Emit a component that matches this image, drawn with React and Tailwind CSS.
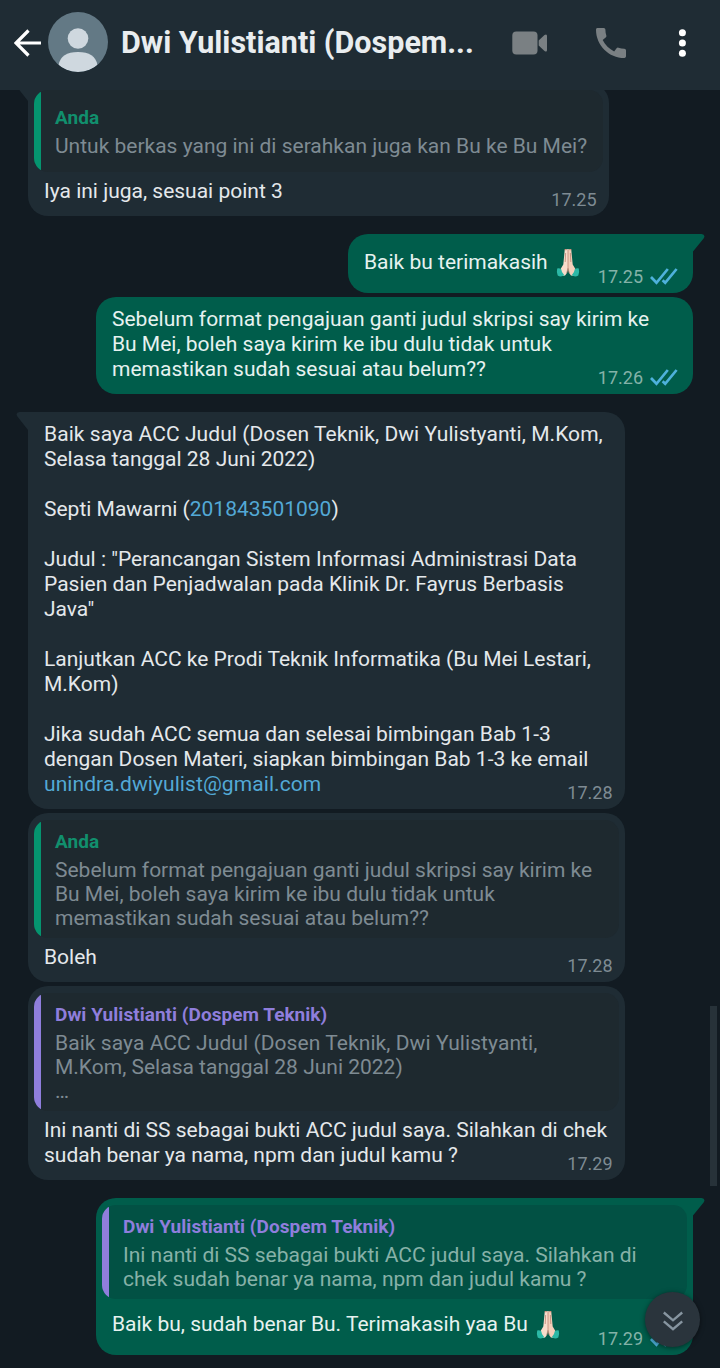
import React from "react";

function PrayIcon() {
  return (
    <svg viewBox="0 0 24 30" className="relative -left-px inline-block h-[30px] w-6 shrink-0">
      <path d="M8.700 2Q9.700.400 10.700 1.600Q11.600.300 12 1.800V20.500L10.600 25.500Q9.500 28 6.500 28Q3.500 24 4.600 21L7.300 16.500Z" fill="#f8dccb" />
      <path d="M15.300 2Q14.300.400 13.300 1.600Q12.400.300 12 1.800V20.500L13.400 25.500Q14.500 28 17.500 28Q20.500 24 19.400 21L16.700 16.500Z" fill="#f3cfba" />
      <path d="M12 2V20L10.800 25M12 20 13.200 25M9.600 5 9.200 14M14.400 5 14.800 14" fill="none" stroke="#bd8573" strokeWidth=".8" />
      <path d="M8.700 1.700H10.500M13.500 1.700H15.300" stroke="#d8907e" strokeWidth="1.200" />
      <path d="M1.200 20.500Q3.500 20 5.200 21.200Q5.500 24.500 8.300 27.300Q5 29.500 1.700 27.500Q.300 24 1.200 20.500Z" fill="#2cb8a6" />
      <path d="M22.800 20.500Q20.500 20 18.800 21.200Q18.500 24.500 15.700 27.300Q19 29.500 22.300 27.500Q23.700 24 22.800 20.500Z" fill="#2cb8a6" />
    </svg>
  );
}

function Ticks() {
  return (
    <svg viewBox="0 0 28 18" className="ml-[7px] h-[18px] w-7 shrink-0" fill="none" stroke="#4eb1dc" strokeWidth="2.700">
      <path d="M1 9 6.500 14.800 17.800 1" />
      <path d="M12.600 12.300 15.200 14.800 26.600 1" />
    </svg>
  );
}

function Quote({ name, lines, mine, own, className }) {
  return (
    <div
      className={`mx-[6px] flex overflow-hidden rounded-[14px] ${own ? "bg-[#025144]" : "bg-[#1e292f]"} ${className}`}
    >
      <div className={`w-[7px] shrink-0 ${mine ? "bg-[#05946f]" : "bg-[#8f7edc]"}`} />
      <div className="flex flex-col justify-center pt-[2px] pl-[14px]">
        <div className={`mb-[5px] whitespace-nowrap text-[19px] leading-[22px] font-bold tracking-[0.03px] ${mine ? "text-[#118f6d]" : "text-[#8f7edc]"}`}>
          {name}
        </div>
        {lines.map((line, i) => (
          <div key={i} className={`whitespace-nowrap text-[21px] leading-6 ${own ? "text-[#87b1a8]" : "text-[#7e8b93]"}`}>
            {line}
          </div>
        ))}
      </div>
    </div>
  );
}

function Bubble({ own, tail, time, quote, lines, className, bodyClass = "pb-3" }) {
  const corners = tail ? (own ? "rounded-b-[20px] rounded-tl-[20px]" : "rounded-b-[20px] rounded-tr-[20px]") : "rounded-[20px]";
  return (
    <div
      className={`relative flex shrink-0 flex-col ${corners} ${own ? "self-end bg-[#005d4b]" : "self-start bg-[#1f2c34]"} ${className}`}
    >
      {tail && own && (
        <svg viewBox="0 0 14 20" className="absolute top-0 -right-3 h-5 w-[14px]" fill="#005d4b">
          <path d="M0 0H10.500Q15 .800 12.600 4.500L2 17.500V20H0Z" />
        </svg>
      )}
      {tail && !own && (
        <svg viewBox="0 0 14 20" className="absolute top-0 -left-3 h-5 w-[14px]" fill="#1f2c34">
          <path d="M14 0H3.500Q-1 .800 1.400 4.500L12 18V20H14Z" />
        </svg>
      )}
      {quote}
      <div className="flex items-end">
        <div className={`w-0 flex-1 pl-4 text-[21px] leading-[25px] whitespace-nowrap ${own ? "text-[#e6f2f0]" : "text-[#e4e8eb]"} ${bodyClass}`}>
          {lines.map((line, i) => (
            <div key={i} className="flex h-[25px] items-center whitespace-pre">
              {line}
            </div>
          ))}
        </div>
        <div className={`flex items-center pb-[6px] text-[18px] leading-5 ${own ? "pr-[15px] text-[#84b2a8]" : "pr-[12.5px] text-[#7e8b93]"}`}>
          <span>{time}</span>
          {own && <Ticks />}
        </div>
      </div>
    </div>
  );
}

function Header() {
  return (
    <header className="flex h-[90px] shrink-0 items-center bg-[#1f2c34] pb-[5px]">
      <svg viewBox="0 0 28 28" className="ml-[14px] h-7 w-7 shrink-0" fill="none" stroke="#fff" strokeWidth="3.200">
        <path d="M27 14H2.500M14.500 1.500 2 14 14.500 26.500" />
      </svg>
      <svg viewBox="0 0 60 60" className="relative -top-px ml-[6px] h-[60px] w-[60px] shrink-0">
        <defs>
          <clipPath id="avatar">
            <circle cx="30" cy="30" r="30" />
          </clipPath>
        </defs>
        <g clipPath="url(#avatar)">
          <rect width="60" height="60" fill="#637985" />
          <circle cx="30" cy="26.500" r="10.300" fill="#cfd8df" />
          <path d="M10.500 53Q13 40 30 40T49.500 53Q41 60 30 60T10.500 53Z" fill="#cfd8df" />
        </g>
      </svg>
      <h1 className="ml-[13px] w-[391px] text-[30.5px] leading-9 font-bold whitespace-nowrap text-[#e9edef]">
        Dwi Yulistianti (Dospem...
      </h1>
      <svg viewBox="0 0 36 24" className="h-6 w-9 shrink-0" fill="#7a8083">
        <rect x="0.300" y="0.500" width="25.200" height="23" rx="4" />
        <path d="M26.700 9.500 32.500 4Q35 2.500 35 5V19Q35 21.500 32.500 20L26.700 14.500Z" />
      </svg>
      <svg viewBox="3 3 18 18" className="ml-12 h-[30px] w-[30px] shrink-0" fill="#7a8083">
        <path d="M20.010 15.380c-1.230 0-2.420-.200-3.530-.560a.977.977 0 0 0-1.010.240l-1.570 1.970c-2.830-1.350-5.480-3.900-6.890-6.830l1.950-1.660c.270-.280.350-.670.240-1.020-.370-1.110-.560-2.300-.560-3.530 0-.540-.450-.990-.990-.990H4.190C3.650 3 3 3.240 3 3.990 3 13.280 10.730 21 20.010 21c.710 0 .990-.630.990-1.180v-3.450c0-.540-.450-.990-.990-.990z" />
      </svg>
      <svg viewBox="0 0 8 28" className="ml-[52px] h-7 w-2 shrink-0" fill="#fff">
        <circle cx="4.400" cy="3.800" r="3.500" />
        <circle cx="4.400" cy="14" r="3.500" />
        <circle cx="4.400" cy="24.200" r="3.500" />
      </svg>
    </header>
  );
}

export default function App() {
  return (
    <div className="relative flex h-[1368px] w-[720px] flex-col overflow-hidden bg-[#121b22] font-[Roboto,sans-serif]">
      <Header />
      <main className="flex flex-1 flex-col overflow-hidden pr-[27px] pl-7">
        <Bubble
          tail
          time="17.25"
          className="-mt-[7px] w-[581px]"
          bodyClass="pt-[7px] pb-3"
          quote={<Quote mine name="Anda" className="mt-[7px] h-[82px]" lines={["Untuk berkas yang ini di serahkan juga kan Bu ke Bu Mei?"]} />}
          lines={["Iya ini juga, sesuai point 3"]}
        />
        <Bubble
          own
          tail
          time="17.25"
          className="mt-[18px] w-[345px]"
          bodyClass="pt-4 pb-[18px]"
          lines={[<React.Fragment key="t">Baik bu terimakasih <span className="ml-1 flex"><PrayIcon /></span></React.Fragment>]}
        />
        <Bubble
          own
          time="17.26"
          className="mt-1 w-[597px]"
          bodyClass="pt-[10px] pb-3"
          lines={[
            "Sebelum format pengajuan ganti judul skripsi say kirim ke",
            "Bu Mei, boleh saya kirim ke ibu dulu tidak untuk",
            "memastikan sudah sesuai atau belum??",
          ]}
        />
        <Bubble
          tail
          time="17.28"
          className="mt-[18px] w-[597px]"
          bodyClass="pt-[10px] pb-3"
          lines={[
            <span key="acc" className="tracking-[0.06px]">Baik saya ACC Judul (Dosen Teknik, Dwi Yulistyanti, M.Kom,</span>,
            "Selasa tanggal 28 Juni 2022)",
            "",
            <React.Fragment key="npm">Septi Mawarni (<span className="text-[#53a9d6]">201843501090</span>)</React.Fragment>,
            "",
            'Judul : "Perancangan Sistem Informasi Administrasi Data',
            "Pasien dan Penjadwalan pada Klinik Dr. Fayrus Berbasis",
            'Java"',
            "",
            "Lanjutkan ACC ke Prodi Teknik Informatika (Bu Mei Lestari,",
            "M.Kom)",
            "",
            "Jika sudah ACC semua dan selesai bimbingan Bab 1-3",
            "dengan Dosen Materi, siapkan bimbingan Bab 1-3 ke email",
            <span key="mail" className="tracking-[0.08px] text-[#53a9d6]">unindra.dwiyulist@gmail.com</span>,
          ]}
        />
        <Bubble
          time="17.28"
          className="mt-1 w-[597px]"
          bodyClass="pt-[7px] pb-3"
          quote={
            <Quote
              mine
              name="Anda"
              className="mt-[7px] h-[118px]"
              lines={[
                "Sebelum format pengajuan ganti judul skripsi say kirim ke",
                "Bu Mei, boleh saya kirim ke ibu dulu tidak untuk",
                "memastikan sudah sesuai atau belum??",
              ]}
            />
          }
          lines={["Boleh"]}
        />
        <Bubble
          time="17.29"
          className="mt-1 w-[597px]"
          bodyClass="pt-[7px] pb-3"
          quote={
            <Quote
              name="Dwi Yulistianti (Dospem Teknik)"
              className="mt-[7px] h-[118px]"
              lines={[
                <span key="acc" className="tracking-[0.07px]">Baik saya ACC Judul (Dosen Teknik, Dwi Yulistyanti,</span>,
                "M.Kom, Selasa tanggal 28 Juni 2022)",
                "…",
              ]}
            />
          }
          lines={["Ini nanti di SS sebagai bukti ACC judul saya. Silahkan di chek", "sudah benar ya nama, npm dan judul kamu ?"]}
        />
        <Bubble
          own
          tail
          time="17.29"
          className="mt-[18px] w-[597px]"
          bodyClass="pt-[13px] pb-[18px]"
          quote={
            <Quote
              own
              name="Dwi Yulistianti (Dospem Teknik)"
              className="mt-[7px] h-[94px]"
              lines={["Ini nanti di SS sebagai bukti ACC judul saya. Silahkan di", "chek sudah benar ya nama, npm dan judul kamu ?"]}
            />
          }
          lines={[<React.Fragment key="t">Baik bu, sudah benar Bu. Terimakasih yaa Bu <span className="ml-1 flex"><PrayIcon /></span></React.Fragment>]}
        />
      </main>
      <div className="absolute top-[1006px] right-[3px] h-[180px] w-[7px] bg-[#273239]" />
      <button className="absolute top-[1292px] left-[645px] flex h-[55px] w-[55px] items-center justify-center rounded-full bg-[#2a343c] pt-[3px] shadow-[0_1px_5px_rgba(0,0,0,0.5)]">
        <svg viewBox="0 0 20 20" className="h-5 w-5" fill="none" stroke="#8795a0" strokeWidth="2.400">
          <path d="M.800 1.500 10 9.300 19.200 1.500M.800 10.300 10 18.100 19.200 10.300" />
        </svg>
      </button>
    </div>
  );
}
